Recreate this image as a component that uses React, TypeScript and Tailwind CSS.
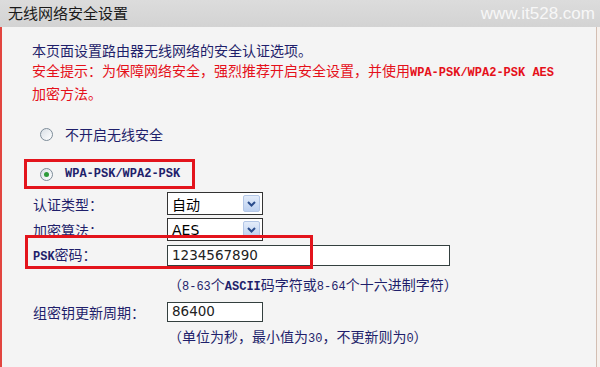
import React from 'react';

// fonts: CJK text in Noto Sans CJK, ascii bits in a mono face like the router UI
const cjk = { fontFamily: '"Noto Sans CJK SC", sans-serif' };
const mono = { fontFamily: '"Liberation Mono", "Noto Sans CJK SC", monospace' };
const sans = { fontFamily: '"DejaVu Sans", "Noto Sans CJK SC", sans-serif' };

const Asc: React.FC<{ children: React.ReactNode; bold?: boolean }> = ({ children, bold }) => (
  <span className={`text-[12px] ${bold ? 'font-bold' : ''}`} style={mono}>{children}</span>
);

const Radio: React.FC<{ checked?: boolean }> = ({ checked }) => (
  <span className="flex h-[13px] w-[13px] shrink-0 items-center justify-center rounded-full border border-[#7d8c99] bg-linear-to-br from-[#d9dfe6] to-white">
    {checked && <span className="h-[5px] w-[5px] rounded-full bg-[#2e9a3b]" />}
  </span>
);

const Select: React.FC<{ value: string; ascii?: boolean }> = ({ value, ascii }) => (
  <div className="flex h-[23px] w-[96px] items-center justify-between border border-[#333] bg-white pl-[4px] pr-[2px]">
    <span className="text-[14px] leading-none text-black" style={ascii ? sans : cjk}>{value}</span>
    <span className="flex h-[17px] w-[17px] items-center justify-center rounded-[2px] border border-[#b3c6e6] bg-linear-to-b from-[#e3ecfa] to-[#bcd0f0]">
      <svg width="9" height="6" viewBox="0 0 9 6">
        <path d="M1 1 L4.5 4.5 L8 1" stroke="#2a4c8c" strokeWidth="2" fill="none" />
      </svg>
    </span>
  </div>
);

const Field: React.FC<{ value: string; width: string }> = ({ value, width }) => (
  <div className={`flex h-full items-center border border-[#34403f] bg-white pl-[4px] ${width}`}>
    <span className="text-[13.5px] leading-none text-[#222]" style={sans}>{value}</span>
  </div>
);

const Label: React.FC<{ children: React.ReactNode }> = ({ children }) => (
  <div className="w-[165px] shrink-0 pl-[31px] text-[14px] leading-[20px] text-[#1f1f6b]" style={cjk}>
    {children}
  </div>
);

const App: React.FC = () => {
  return (
    <div className="flex h-[367px] w-[600px] flex-col overflow-hidden bg-[#f6f0ec]" style={cjk}>
      {/* title bar */}
      <header className="flex h-[27px] shrink-0 items-center justify-between bg-linear-to-b from-[#dcdcdc] to-[#d3d3d3] pl-[8px] pr-[5px]">
        <span className="text-[15px] text-[#1a1a1a]">无线网络安全设置</span>
        <span className="text-[17px] text-[#f7f7f7]" style={{ fontFamily: '"Liberation Sans", Arial, sans-serif' }}>
          www.it528.com
        </span>
      </header>

      {/* body */}
      <main className="mr-[3px] flex flex-1 flex-col border-l-2 border-r border-l-[#e2453f] border-r-[#d3beb2] bg-[#f4f4f4]">
        <div className="mt-[13px] pl-[30px] text-[14px] leading-[20px]">
          <div className="text-[#1f1f6b]">本页面设置路由器无线网络的安全认证选项。</div>
          <div className="text-[#e5101a]">
            安全提示：为保障网络安全，强烈推荐开启安全设置，并使用<Asc bold>WPA-PSK/WPA2-PSK AES</Asc>
          </div>
          <div className="text-[#e5101a]">加密方法。</div>
        </div>

        <div className="mt-[21px] flex h-[20px] items-center gap-[12px] pl-[38px]">
          <Radio />
          <span className="text-[14px] text-[#1f1f6b]">不开启无线安全</span>
        </div>

        {/* highlighted option */}
        <div className="ml-[22px] mt-[15px] flex h-[30px] w-[171px] items-center gap-[12px] border-[3px] border-[#e3141c] pl-[13px]">
          <Radio checked />
          <Asc bold>
            <span className="text-[#1f1f6b]">WPA-PSK/WPA2-PSK</span>
          </Asc>
        </div>

        <div className="mt-[3px] flex h-[23px] items-center">
          <Label>认证类型：</Label>
          <Select value="自动" />
        </div>
        <div className="mt-[3px] flex h-[23px] items-center">
          <Label>加密算法：</Label>
          <Select value="AES" ascii />
        </div>

        <div className="relative mt-[4px] flex h-[21px] items-center">
          <Label>
            <Asc bold>PSK</Asc>密码：
          </Label>
          <Field value="1234567890" width="w-[283px]" />
          {/* annotation frame drawn over the row */}
          <div className="pointer-events-none absolute left-[23px] top-[-10px] h-[34px] w-[288px] border-[3px] border-[#e3141c]" />
        </div>
        <div className="mt-[8px] pl-[166px] text-[14px] leading-[20px] text-[#1f1f6b]">
          （<Asc>8-63</Asc>个<Asc bold>ASCII</Asc>码字符或<Asc>8-64</Asc>个十六进制字符）
        </div>

        <div className="mt-[5px] flex h-[20px] items-center">
          <Label>组密钥更新周期：</Label>
          <Field value="86400" width="w-[96px]" />
        </div>
        <div className="mt-[4px] pl-[166px] text-[14px] leading-[20px] text-[#1f1f6b]">
          （单位为秒，最小值为<Asc>30</Asc>，不更新则为<Asc>0</Asc>）
        </div>
      </main>
    </div>
  );
};

export default App;
